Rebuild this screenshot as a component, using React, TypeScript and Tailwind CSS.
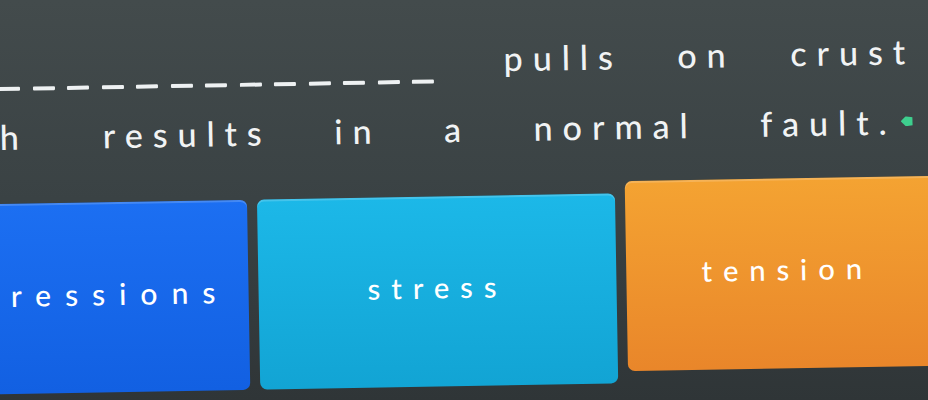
import React from "react";

const dashes = Array.from({ length: 13 }, (_, i) => i);

function AnswerButton({ label, className }: { label: string; className: string }) {
  return (
    <button
      className={`flex h-[190px] w-[358px] shrink-0 items-center justify-center rounded-[7px] pb-[8px] text-white shadow-[inset_0_2px_0_rgba(255,255,255,0.18)] ${className}`}
    >
      {label}
    </button>
  );
}

export default function App() {
  return (
    <div className="h-[400px] w-[928px] overflow-hidden bg-gradient-to-b from-[#434b4c] via-[#3a4244] to-[#2f3537] font-['Lato',sans-serif] font-medium text-[#f1f3f4]">
      <div className="flex h-full -rotate-[1deg] flex-col pt-[42px]">
        {/* fill-in line */}
        <div className="flex h-[34px] items-start">
          <div className="mt-[37px] flex shrink-0 gap-[12.5px]">
            {dashes.map((d) => (
              <span key={d} className="h-[4px] w-[22px] rounded-[1px] bg-[#eef1f2]" />
            ))}
          </div>
          <span className="ml-[70px] whitespace-nowrap text-[34px] leading-none tracking-[10px] [word-spacing:36px]">
            pulls on crust
          </span>
        </div>

        <div className="mt-[36px] flex h-[34px] items-center whitespace-nowrap text-[34px] leading-none tracking-[10px]">
          <span className="ml-[1px]">h</span>
          <span className="ml-[74px] [word-spacing:44px]">results in a normal fault.</span>
          <svg viewBox="0 0 12 10" className="ml-[4px] h-[10px] w-[12px] shrink-0">
            <polygon points="0,5 5,0 12,1 12,9 5,10" fill="#3ecf8e" />
          </svg>
        </div>

        {/* answer choices */}
        <div className="ml-[-111px] mt-[50px] flex gap-[10px]">
          <AnswerButton
            label="compressions"
            className="pr-[28px] text-[30px] tracking-[14px] bg-gradient-to-b from-[#1c6ff2] to-[#1260e2]"
          />
          <AnswerButton
            label="stress"
            className="text-[29px] tracking-[11px] bg-gradient-to-b from-[#1cb8e8] to-[#12a4d4]"
          />
          <AnswerButton
            label="tension"
            className="-mt-[12px] pr-[36px] text-[29px] tracking-[11px] bg-gradient-to-b from-[#f4a332] to-[#e9862a]"
          />
        </div>
      </div>
    </div>
  );
}
